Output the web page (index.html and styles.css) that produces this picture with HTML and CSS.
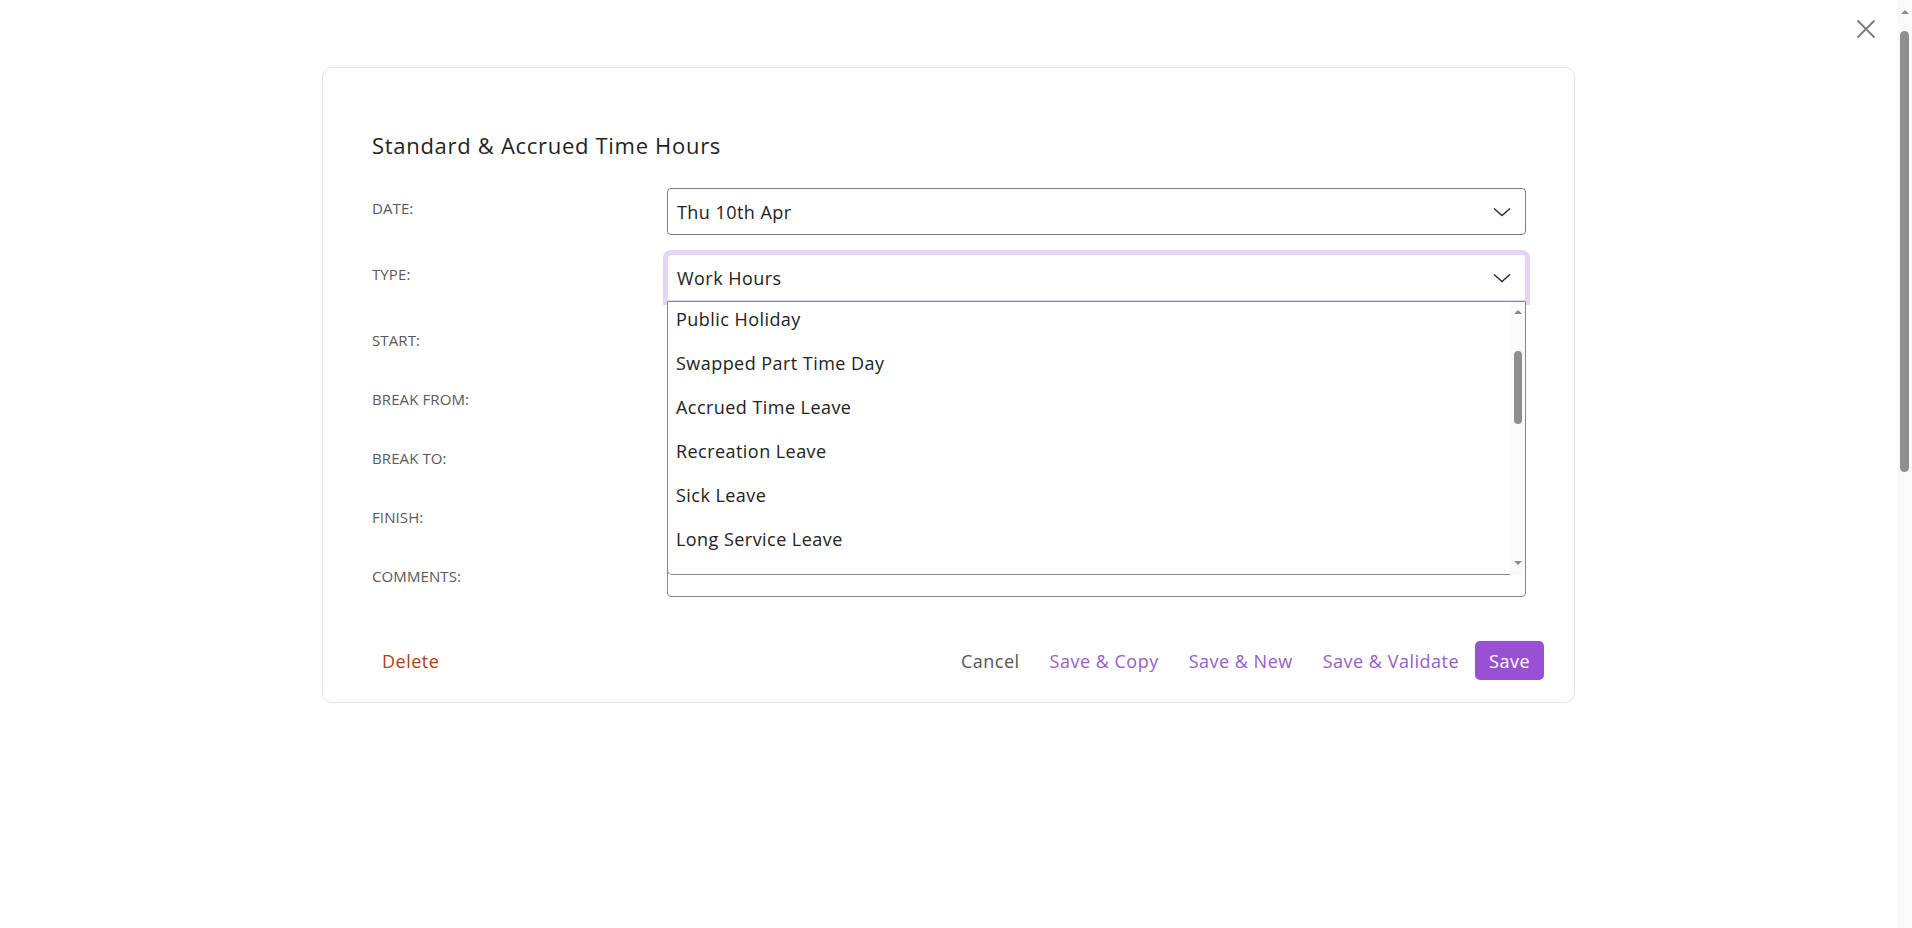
FILE: index.html
```html
<!DOCTYPE html>
<html lang="en">
<head>
<meta charset="utf-8">
<title>Standard &amp; Accrued Time Hours</title>
<link rel="stylesheet" href="styles.css">
</head>
<body>
<div class="app">
  <main class="page">
    <div class="topbar">
      <button class="close" aria-label="Close">
        <svg width="20" height="20" viewBox="0 0 20 20"><path d="M2 2L18 18M18 2L2 18" stroke="#7a7a7a" stroke-width="1.8" fill="none" stroke-linecap="round"/></svg>
      </button>
    </div>
    <section class="card">
      <div class="card-body">
        <h1 class="title">Standard &amp; Accrued Time Hours</h1>
        <div class="form">
          <div class="lbl">DATE:</div>
          <div class="field">
            <div class="select"><span>Thu 10th Apr</span>
              <svg class="chev" width="18" height="10" viewBox="0 0 18 10"><path d="M1 1.5L9 8.5L17 1.5" stroke="#2b2b2b" stroke-width="1.5" fill="none"/></svg>
            </div>
          </div>

          <div class="lbl">TYPE:</div>
          <div class="field type-field">
            <div class="select focused"><span>Work Hours</span>
              <svg class="chev" width="18" height="10" viewBox="0 0 18 10"><path d="M1 1.5L9 8.5L17 1.5" stroke="#2b2b2b" stroke-width="1.5" fill="none"/></svg>
            </div>
            <div class="dropdown">
              <div class="options">
                <div class="options-inner">
                  <div class="opt">Public Holiday</div>
                  <div class="opt">Swapped Part Time Day</div>
                  <div class="opt">Accrued Time Leave</div>
                  <div class="opt">Recreation Leave</div>
                  <div class="opt">Sick Leave</div>
                  <div class="opt">Long Service Leave</div>
                </div>
              </div>
              <div class="dd-scroll">
                <div class="arrow up"></div>
                <div class="dd-track"><div class="dd-thumb"></div></div>
                <div class="arrow down"></div>
              </div>
            </div>
          </div>

          <div class="lbl">START:</div>
          <div class="field"><div class="input"></div></div>
          <div class="lbl">BREAK FROM:</div>
          <div class="field"><div class="input"></div></div>
          <div class="lbl">BREAK TO:</div>
          <div class="field"><div class="input"></div></div>
          <div class="lbl">FINISH:</div>
          <div class="field"><div class="input"></div></div>
          <div class="lbl">COMMENTS:</div>
          <div class="field"><div class="input textarea"></div></div>
        </div>
      </div>
      <footer class="card-foot">
        <button class="btn delete">Delete</button>
        <div class="actions">
          <button class="btn cancel">Cancel</button>
          <button class="btn link">Save &amp; Copy</button>
          <button class="btn link">Save &amp; New</button>
          <button class="btn link">Save &amp; Validate</button>
          <button class="btn primary">Save</button>
        </div>
      </footer>
    </section>
  </main>
  <div class="vscroll">
    <div class="arrow up"></div>
    <div class="vs-track"><div class="vs-thumb"></div></div>
  </div>
</div>
</body>
</html>
```

FILE: styles.css
```css
* { box-sizing: border-box; }
html, body { margin: 0; padding: 0; height: 100%; }
body {
  font-family: "Open Sans", "Noto Sans", sans-serif;
  color: #222;
  background: #fff;
  overflow: hidden;
}
.app { display: flex; height: 928px; }
.page { flex: 1; min-width: 0; }

.topbar {
  display: flex;
  justify-content: flex-end;
  padding: 19px 21px 0 0;
  height: 67px;
}
.close {
  border: 0; background: none; padding: 0;
  width: 20px; height: 20px;
  display: flex;
}

.card {
  width: 1253px;
  height: 636px;
  margin: 0 auto;
  border: 1px solid #e4e4e4;
  border-radius: 10px;
  display: flex;
  flex-direction: column;
}
.card-body { padding: 62px 49px 22px 49px; }
.title {
  margin: 0 0 28px 0;
  font-size: 22px;
  line-height: 30px;
  font-weight: 400;
  letter-spacing: 0.7px;
  color: #1f1f1f;
}

.form {
  display: grid;
  grid-template-columns: 295px 859px;
  grid-auto-rows: auto;
  row-gap: 19px;
}
.lbl {
  font-size: 15px;
  line-height: 20px;
  letter-spacing: 0.1px;
  color: #595959;
  padding-top: 10px;
}
.field { position: relative; }

.select {
  height: 47px;
  border: 1px solid #7e7e7e;
  border-radius: 4px;
  display: flex;
  align-items: center;
  justify-content: space-between;
  padding: 0 14px 0 9px;
  font-size: 18px;
  letter-spacing: 0.45px;
  color: #222;
  background: #fff;
}
.select.focused {
  border-color: #e4d4f5;
  box-shadow: 0 0 0 4px #e4d4f5;
  border-bottom-left-radius: 0;
  border-bottom-right-radius: 0;
}
.chev { display: block; }

.input {
  height: 40px;
  border: 1px solid #8a8a8a;
  border-radius: 4px;
  background: #fff;
}
.input.textarea { height: 41px; }

.dropdown {
  position: absolute;
  top: 100%;
  left: 0;
  right: 0;
  height: 274px;
  background: #fff;
  border: 1px solid #888;
  border-radius: 0 0 0 5px;
  z-index: 5;
  display: flex;
}
.options { flex: 1; overflow: hidden; }
.options-inner { margin-top: -5px; }
.opt {
  height: 44px;
  display: flex;
  align-items: center;
  padding-left: 8px;
  font-size: 18px;
  letter-spacing: 0.45px;
  color: #222;
}
.dd-scroll {
  width: 15px;
  background: #fafafa;
  display: flex;
  flex-direction: column;
  align-items: center;
  margin-bottom: -1px;
}
.arrow { width: 0; height: 0; border-left: 4px solid transparent; border-right: 4px solid transparent; }
.arrow.up { border-bottom: 4px solid #8a8a8a; margin-top: 8px; }
.arrow.down { border-top: 4px solid #8a8a8a; margin-bottom: 10px; }
.dd-track { flex: 1; width: 100%; display: flex; justify-content: center; }
.dd-thumb {
  margin-top: 37px;
  width: 8px;
  height: 73px;
  border-radius: 4px;
  background: #8f8f8f;
}

.card-foot {
  flex: 1;
  display: flex;
  align-items: center;
  padding: 0 30px 0 49px;
}
.actions { margin-left: auto; display: flex; align-items: center; gap: 2px; }
.btn {
  font-family: "Open Sans", "Noto Sans", sans-serif;
  font-size: 18px;
  letter-spacing: 0.5px;
  height: 39px;
  padding: 0 14px;
  border: 0;
  background: none;
  border-radius: 5px;
  cursor: pointer;
}
.btn.delete { color: #b0400f; padding: 0 10px; }
.btn.cancel { color: #555; }
.btn.link { color: #9a5cc9; }
.btn.primary { background: #9a50d5; color: #fff; padding: 0 14px; }

.vscroll {
  width: 15px;
  background: #fafafa;
  display: flex;
  flex-direction: column;
  align-items: center;
}
.vscroll .arrow.up { margin-top: 10px; }
.vs-track { flex: 1; width: 100%; display: flex; justify-content: center; }
.vs-thumb {
  margin-top: 17px;
  width: 9px;
  height: 441px;
  border-radius: 5px;
  background: #8f8f8f;
}
```
